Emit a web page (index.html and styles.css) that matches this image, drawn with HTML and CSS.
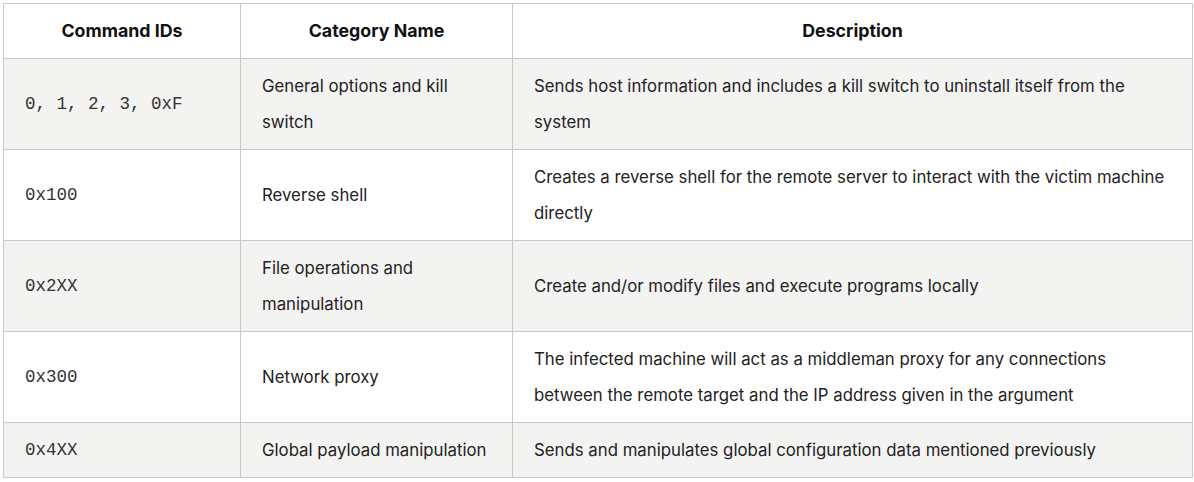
FILE: index.html
```html
<!DOCTYPE html>
<html>
<head>
<meta charset="utf-8">
<link rel="stylesheet" href="styles.css">
</head>
<body>
<div class="wrap">
<table class="cmd-table">
  <colgroup>
    <col class="c1"><col class="c2"><col class="c3">
  </colgroup>
  <thead>
    <tr><th>Command IDs</th><th>Category Name</th><th>Description</th></tr>
  </thead>
  <tbody>
    <tr class="alt"><td class="code">0, 1, 2, 3, 0xF</td><td>General options and kill switch</td><td>Sends host information and includes a kill switch to uninstall itself from the system</td></tr>
    <tr><td class="code">0x100</td><td>Reverse shell</td><td>Creates a reverse shell for the remote server to interact with the victim machine directly</td></tr>
    <tr class="alt"><td class="code">0x2XX</td><td>File operations and manipulation</td><td>Create and/or modify files and execute programs locally</td></tr>
    <tr><td class="code">0x300</td><td>Network proxy</td><td>The infected machine will act as a middleman proxy for any connections between the remote target and the IP address given in the argument</td></tr>
    <tr class="alt"><td class="code">0x4XX</td><td>Global payload manipulation</td><td>Sends and manipulates global configuration data mentioned previously</td></tr>
  </tbody>
</table>
</div>
</body>
</html>
```
FILE: styles.css
```css
html, body { margin: 0; padding: 0; background: #fff; }
.wrap { padding: 3px; }
.cmd-table {
  width: 1189px;
  border-collapse: collapse;
  table-layout: fixed;
  font-family: Inter, "Noto Sans", sans-serif;
  font-size: 16.8px;
  color: #222;
}
.c1 { width: 237px; }
.c2 { width: 272px; }
.c3 { width: 680px; }
.cmd-table th, .cmd-table td {
  border: 1px solid #c8c8c8;
  padding: 9px 21px;
  line-height: 36px;
  text-align: left;
  vertical-align: middle;
}
.cmd-table th {
  text-align: center;
  font-weight: 700;
  font-size: 17.8px;
  color: #111;
  background: #fff;
}
.cmd-table tr.alt td { background: #f3f3f2; }
.cmd-table td.code {
  font-family: "Liberation Mono", "Courier New", monospace;
  font-size: 17.5px;
  color: #333;
}
```
